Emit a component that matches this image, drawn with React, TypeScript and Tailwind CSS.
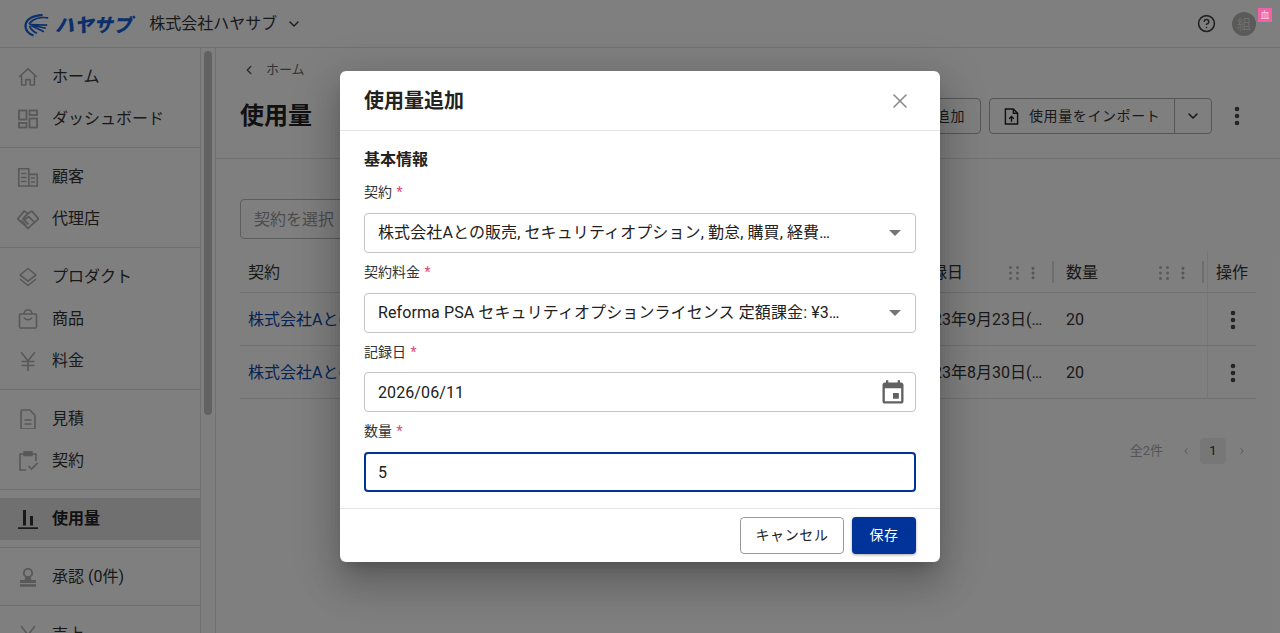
import React from "react";
import { ChevronDown, ChevronLeft, ChevronRight, CircleHelp, EllipsisVertical, X } from "lucide-react";

const FONT = "font-['Roboto','Noto_Sans_CJK_JP',sans-serif]";

const HomeIcon = () => (
  <svg viewBox="0 0 20 20" className="w-5 h-5" fill="none" stroke="#b0b0b0" strokeWidth="1.6" strokeLinejoin="round">
    <path d="M1 10 10 1.8 19 10" />
    <path d="M3.6 8.4V18h4.2v-5.4h4.4V18h4.2V8.4" />
  </svg>
);
const DashIcon = () => (
  <svg viewBox="0 0 20 20" className="w-5 h-5" fill="none" stroke="#b0b0b0" strokeWidth="1.8">
    <rect x="1" y="1.5" width="7.5" height="9" />
    <rect x="1" y="14" width="7.5" height="4.5" />
    <rect x="11.5" y="1.5" width="7.5" height="4.5" />
    <rect x="11.5" y="9.5" width="7.5" height="9" />
  </svg>
);
const BuildingIcon = () => (
  <svg viewBox="0 0 20 20" className="w-5 h-5" fill="none" stroke="#b0b0b0" strokeWidth="1.6">
    <path d="M.8 19V1.8h10V19zM10.8 7.4h8.4V19H.8" />
    <path d="M3 6.5h5.5M3 10.5h5.5M3 14.5h5.5M13 11h4M13 15h4" />
  </svg>
);
const HandshakeIcon = () => (
  <svg viewBox="0 0 20 20" className="w-[22px] h-[22px]" fill="none" stroke="#b0b0b0" strokeWidth="1.6" strokeLinejoin="round">
    <path d="M6.5 2.8 10 5l3.5-2.2 6 7L10 18.6.7 9.8z" />
    <path d="M10 5 6.6 8.2c-.8 1 .6 2.2 1.6 1.4l2.4-1.8 5 5M5 9.5l5.4 5.4M3.6 11.2l4.6 4.6" />
  </svg>
);
const LayersIcon = () => (
  <svg viewBox="0 0 20 20" className="w-5 h-5" fill="none" stroke="#b0b0b0" strokeWidth="1.6" strokeLinejoin="round">
    <path d="M10 1.5 18 8l-8 6.2L2 8z" />
    <path d="M2 12l8 6.5 8-6.5" />
  </svg>
);
const BagIcon = () => (
  <svg viewBox="0 0 20 20" className="w-5 h-5" fill="none" stroke="#b0b0b0" strokeWidth="1.6" strokeLinejoin="round">
    <rect x="1.5" y="5" width="17" height="14" rx="1" />
    <path d="M6 5c0-5.4 8-5.4 8 0M6 8.5c1.5 3 6.5 3 8 0" />
  </svg>
);
const YenIcon = () => (
  <svg viewBox="0 0 20 20" className="w-5 h-5" fill="none" stroke="#b0b0b0" strokeWidth="1.6">
    <path d="M3 1l7 9 7-9M10 10v10M3.5 10.5h13M3.5 14.5h13" />
  </svg>
);
const DocIcon = () => (
  <svg viewBox="0 0 20 20" className="w-5 h-5" fill="none" stroke="#b0b0b0" strokeWidth="1.6" strokeLinejoin="round">
    <path d="M3 2.5Q3 1 4.5 1H12l5 5.5v12Q17 20 15.5 20h-11Q3 20 3 18.5z" />
    <path d="M6.5 11h7M6.5 15h7" />
  </svg>
);
const ClipCheckIcon = () => (
  <svg viewBox="0 0 20 20" className="w-5 h-5" fill="none" stroke="#b0b0b0" strokeWidth="1.6">
    <path d="M6 3H2v16h6M14 3h4v7" />
    <rect x="6" y="1" width="8" height="3.5" fill="#b0b0b0" />
    <path d="M10.5 15l3 3 6-6" />
  </svg>
);
const BarsIcon = () => (
  <svg viewBox="0 0 20 20" className="w-5 h-5" fill="#333333">
    <rect x="5" y="1" width="3" height="15.5" />
    <rect x="12" y="7" width="3" height="9.5" />
    <rect x="0" y="18.3" width="20" height="1.7" />
  </svg>
);
const StampIcon = () => (
  <svg viewBox="0 0 20 20" className="w-5 h-5" fill="#b0b0b0">
    <path fillRule="evenodd" d="M10 1a5 5 0 0 1 2.6 9.3L13.5 13H18v3H2v-3h4.500l.9-2.700A5 5 0 0 1 10 1zm0 1.800a3.200 3.200 0 0 0 0 6.400 3.200 3.200 0 0 0 0-6.400z" />
    <rect x="2" y="17.2" width="16" height="2.5" />
  </svg>
);

const Logo = () => (
  <div className="flex items-center">
    <svg viewBox="0 0 30 30" className="w-7 h-7" fill="none" stroke="#1660d8">
      <path d="M21 5.5C12 6 4.500 8 2.800 15.500c-1 6 3.500 10.500 8.500 11.800" strokeWidth="2.400" />
      <path d="M27 8.500C18 7 10 9.500 6.500 15" strokeWidth="1.800" />
      <path d="M7 15.500l19 .8M8 16l16.500 3.500M9 16.800l13.500 6.500" strokeWidth="1.800" />
      <path d="M7 17c1.500 4 4.500 6.500 8 8" strokeWidth="1.800" />
    </svg>
    <span className="ml-1 text-[19px] leading-none font-black italic text-[#1660d8] tracking-[0.3px] font-['Noto_Sans_CJK_JP',sans-serif]">ハヤサブ</span>
  </div>
);

const NavItem = ({ icon, label, active }: { icon: React.ReactNode; label: string; active?: boolean }) => (
  <div className={`h-[42px] flex items-center pl-[18px] ${active ? "bg-[#e0e0e0] font-bold text-[#222]" : "text-[#333]"}`}>
    <span className="w-[22px] flex justify-center -ml-px">{icon}</span>
    <span className="ml-[13px] text-base">{label}</span>
  </div>
);

const NavGroup = ({ children }: { children: React.ReactNode }) => (
  <div className="pt-2 pb-[7px] border-b border-[#dedede]">{children}</div>
);

const Sidebar = () => (
  <aside className="w-[216px] shrink-0 flex border-r border-[#e0e0e0] overflow-hidden">
    <div className="w-[201px] shrink-0 border-r border-[#e0e0e0]">
      <NavGroup>
        <NavItem icon={<HomeIcon />} label="ホーム" />
        <NavItem icon={<DashIcon />} label="ダッシュボード" />
      </NavGroup>
      <NavGroup>
        <NavItem icon={<BuildingIcon />} label="顧客" />
        <NavItem icon={<HandshakeIcon />} label="代理店" />
      </NavGroup>
      <NavGroup>
        <NavItem icon={<LayersIcon />} label="プロダクト" />
        <NavItem icon={<BagIcon />} label="商品" />
        <NavItem icon={<YenIcon />} label="料金" />
      </NavGroup>
      <NavGroup>
        <NavItem icon={<DocIcon />} label="見積" />
        <NavItem icon={<ClipCheckIcon />} label="契約" />
      </NavGroup>
      <NavGroup>
        <NavItem icon={<BarsIcon />} label="使用量" active />
      </NavGroup>
      <NavGroup>
        <NavItem icon={<StampIcon />} label="承認 (0件)" />
      </NavGroup>
      <NavGroup>
        <NavItem icon={<YenIcon />} label="売上" />
      </NavGroup>
    </div>
    <div className="flex-1 pt-[3px] pl-[3px]">
      <div className="w-2 h-[364px] rounded bg-[#c4c4c4]" />
    </div>
  </aside>
);

const GripCell = () => (
  <div className="flex items-center gap-[6px]">
    <svg viewBox="0 0 10 14" className="w-[10px] h-[14px]" fill="#b5b5b5">
      {[1.5, 7, 12.5].map((y) => (
        <g key={y}>
          <circle cx="1.5" cy={y} r="1.5" />
          <circle cx="8.5" cy={y} r="1.5" />
        </g>
      ))}
    </svg>
    <EllipsisVertical className="w-4 h-4 text-[#aaa]" strokeWidth={2.6} />
  </div>
);

const TableRow = ({ date }: { date: string }) => (
  <div className="h-[53px] flex items-center border-b border-[#e0e0e0] text-base">
    <div className="w-[665px] pl-2 text-[#0a47a8] pt-px">株式会社Aとの販売</div>
    <div className="w-[149px] pl-[10px] pr-[9px] text-[#333] whitespace-nowrap overflow-hidden text-ellipsis pt-px">{date}</div>
    <div className="w-[153px] pl-3 text-[#333] pt-px">20</div>
    <div className="flex-1 h-full flex items-center justify-center border-l border-[#ececec] pl-px pt-px">
      <EllipsisVertical className="w-6 h-6 text-[#444]" strokeWidth={2.6} />
    </div>
  </div>
);

const Page = () => (
  <div className="h-[633px] bg-white flex flex-col overflow-hidden">
    <header className="h-[48px] shrink-0 flex items-center border-b border-[#e0e0e0] pl-[23px] pr-6">
      <Logo />
      <span className="ml-[17px] text-base text-[#333]">株式会社ハヤサブ</span>
      <ChevronDown className="ml-[9px] w-4 h-4 text-[#333]" strokeWidth={2} />
      <div className="ml-auto flex items-center">
        <CircleHelp className="w-[19px] h-[19px] text-[#444]" />
        <div className="relative ml-[16px] w-6 h-6 rounded-full bg-[#b5b5b5] text-[#dddddd] text-sm flex items-center justify-center">
          組
          <span className="absolute z-10 -top-1 -right-4 w-[14px] h-[14px] bg-[#f062a8] text-[#ffd0e6] text-[9px] leading-[14px] text-center">血</span>
        </div>
      </div>
    </header>
    <div className="flex-1 flex min-h-0">
      <Sidebar />
      <main className="flex-1 min-w-0">
        <div className="h-[111px] border-b border-[#e0e0e0] pl-6 pr-[31px] pt-[12px]">
          <div className="flex items-center text-[13px] text-[#666] h-[20px] pl-[3px]">
            <ChevronLeft className="w-[14px] h-[14px] text-[#555] -ml-px" strokeWidth={2.4} />
            <span className="ml-[10px]">ホーム</span>
          </div>
          <div className="flex items-center mt-[18px]">
            <h1 className="text-2xl font-bold text-[#222]">使用量</h1>
            <div className="ml-auto flex items-center text-sm text-[#333] tracking-[0.6px]">
              <div className="h-9 w-[150px] border border-[#aaa] rounded flex items-center justify-end pr-[15px]">使用量を追加</div>
              <div className="ml-2 h-9 w-[223px] border border-[#aaa] rounded flex items-center">
                <svg viewBox="0 0 16 18" className="ml-[14px] w-[15px] h-[17px]" fill="none" stroke="#222" strokeWidth="1.5">
                  <path d="M1.5 1h8.5l4.500 4.500V17h-13z" />
                  <path d="M10 1v4.500h4.500" />
                  <path d="M8 14.500V10M5.500 11.500 8 9l2.500 2.500" />
                </svg>
                <span className="ml-[10px] w-[144px] whitespace-nowrap">使用量をインポート</span>
                <div className="ml-auto h-full w-[37px] border-l border-[#aaa] flex items-center justify-center">
                  <ChevronDown className="w-4 h-4 text-[#333]" strokeWidth={2.4} />
                </div>
              </div>
              <EllipsisVertical className="ml-[13px] w-6 h-6 text-[#444]" strokeWidth={2.6} />
            </div>
          </div>
        </div>
        <div className="px-6 pt-[40px]">
          <div className="h-10 w-[360px] border border-[#bbb] rounded px-[13px] pt-px flex items-center text-base text-[#999]">契約を選択</div>
          <div className="mt-[13px] h-[41px] flex items-center border-b border-[#e0e0e0] text-base text-[#333]">
            <div className="w-[665px] pl-2 pt-px">契約</div>
            <div className="w-[149px] pl-[10px] pr-[11px] pt-px flex items-center justify-between border-r-2 border-[#ddd] h-[22px]">
              記録日
              <GripCell />
            </div>
            <div className="w-[150px] pl-3 pr-[11px] pt-px flex items-center justify-between border-r-2 border-[#ddd] h-[22px]">
              数量
              <GripCell />
            </div>
            <div className="w-[3px]" />
            <div className="flex-1 h-full flex items-center justify-center border-l border-[#ececec] whitespace-nowrap pt-px">操作</div>
          </div>
          <TableRow date="2023年9月23日(土)" />
          <TableRow date="2023年8月30日(水)" />
          <div className="mt-[39px] flex items-center justify-end pr-[9px]">
            <span className="text-[13px] text-[#aaa]">全2件</span>
            <ChevronLeft className="ml-[18px] w-[10px] h-[10px] text-[#aaa]" strokeWidth={2.4} />
            <div className="ml-[9px] w-[26px] h-[26px] rounded-sm bg-[#eeeeee] text-[13px] text-[#333] flex items-center justify-center">1</div>
            <ChevronRight className="ml-[11px] w-[10px] h-[10px] text-[#aaa]" strokeWidth={2.4} />
          </div>
        </div>
      </main>
    </div>
  </div>
);

const FieldLabel = ({ label }: { label: string }) => (
  <div className="h-[39.67px] text-sm leading-[38px] text-[#333]">
    {label} <span className="text-[#e0457b] ml-px">*</span>
  </div>
);

const SelectField = ({ value }: { value: string }) => (
  <div className="h-10 border border-[#c4c4c4] rounded flex items-center pl-[13px] pr-[14px] text-base text-[#212121] tracking-[0.1px]">
    <span className="w-[464px] whitespace-nowrap overflow-hidden text-ellipsis">{value}</span>
    <span className="ml-auto w-0 h-0 border-x-[6px] border-x-transparent border-t-[6px] border-t-[#757575]" />
  </div>
);

const Modal = () => (
  <div className="absolute inset-0 bg-black/50 flex items-center justify-center">
    <div className="w-[600px] h-[491px] bg-white rounded-md shadow-[0_11px_15px_-7px_rgba(0,0,0,0.2),0_24px_38px_3px_rgba(0,0,0,0.14),0_9px_46px_8px_rgba(0,0,0,0.12)] flex flex-col">
      <div className="h-[60px] shrink-0 border-b border-[#e6e6e6] flex items-center px-6">
        <h2 className="text-xl font-bold text-[#222] pt-px">使用量追加</h2>
        <X className="ml-auto mr-1 w-6 h-6 text-[#8a8a8a]" strokeWidth={1.6} />
      </div>
      <div className="flex-1 px-6 pt-4">
        <h3 className="text-base leading-6 font-bold text-[#222] pt-px mb-[1.33px]">基本情報</h3>
        <FieldLabel label="契約" />
        <SelectField value="株式会社Aとの販売, セキュリティオプション, 勤怠, 購買, 経費精算" />
        <FieldLabel label="契約料金" />
        <SelectField value="Reforma PSA セキュリティオプションライセンス 定額課金: ¥3000" />
        <FieldLabel label="記録日" />
        <div className="h-10 border border-[#c4c4c4] rounded flex items-center pl-[13px] pr-[8px] pt-px text-base text-[#212121] tracking-[0.1px]">
          2026/06/11
          <svg viewBox="0 0 24 24" className="ml-auto w-7 h-7" fill="#616161">
            <path d="M17 12h-5v5h5v-5zM16 1v2H8V1H6v2H5c-1.1 0-2 .9-2 2v14c0 1.1.9 2 2 2h14c1.1 0 2-.9 2-2V5c0-1.1-.9-2-2-2h-1V1h-2zm3 18H5V8h14v11z" />
          </svg>
        </div>
        <FieldLabel label="数量" />
        <div className="h-10 border-2 border-[#003399] rounded flex items-center pl-[12px] pt-[2px] text-base text-[#212121]">5</div>
      </div>
      <div className="h-[54px] shrink-0 border-t border-[#e6e6e6] flex items-center justify-end gap-2 px-6">
        <div className="w-[104px] h-[37px] border border-[#999] rounded pb-[2px] flex items-center justify-center text-sm text-[#222] tracking-[0.6px]">キャンセル</div>
        <div className="w-16 h-[37px] bg-[#003399] rounded pb-[2px] shadow-[0_1px_3px_rgba(0,0,0,0.35)] flex items-center justify-center text-sm text-white tracking-[0.6px]">保存</div>
      </div>
    </div>
  </div>
);

export default function App() {
  return (
    <div className={`relative h-[633px] overflow-hidden ${FONT}`}>
      <Page />
      <Modal />
    </div>
  );
}
